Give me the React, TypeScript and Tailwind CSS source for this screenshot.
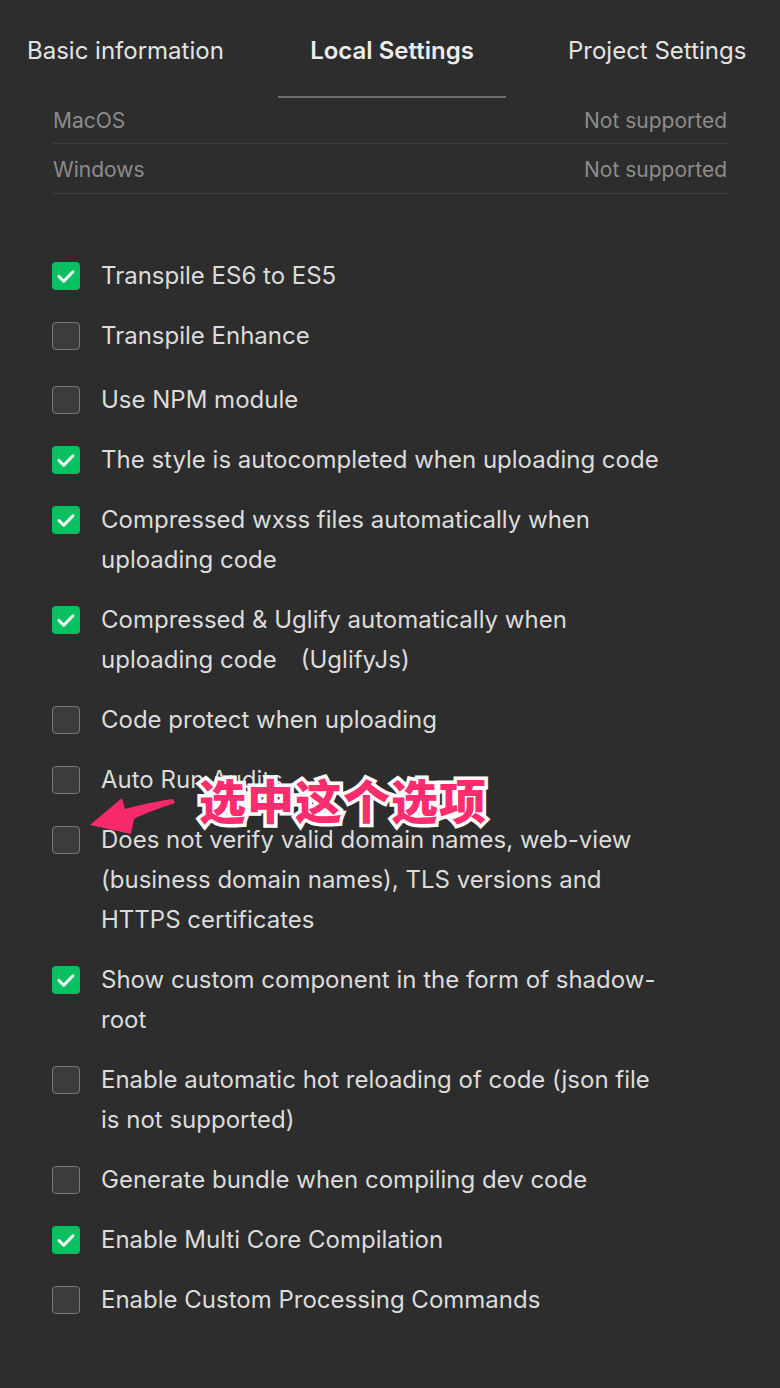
import React from "react";

type Item = { label: string; checked: boolean; extra?: string };

const items: Item[] = [
  { label: "Transpile ES6 to ES5", checked: true },
  { label: "Transpile Enhance", checked: false, extra: "mb-[4px]" },
  { label: "Use NPM module", checked: false },
  { label: "The style is autocompleted when uploading code", checked: true },
  { label: "Compressed wxss files automatically when uploading code", checked: true },
  { label: "Compressed & Uglify automatically when uploading code\u3000(UglifyJs)", checked: true },
  { label: "Code protect when uploading", checked: false },
  { label: "Auto Run Audits", checked: false },
  {
    label:
      "Does not verify valid domain names, web-view (business domain names), TLS versions and HTTPS certificates",
    checked: false,
  },
  { label: "Show custom component in the form of shadow-root", checked: true },
  { label: "Enable automatic hot reloading of code (json file is not supported)", checked: false },
  { label: "Generate bundle when compiling dev code", checked: false },
  { label: "Enable Multi Core Compilation", checked: true },
  { label: "Enable Custom Processing Commands", checked: false },
];

function Checkbox({ checked }: { checked: boolean }) {
  if (checked) {
    return (
      <div className="mt-[6px] flex h-[28px] w-[28px] shrink-0 items-center justify-center rounded-[4px] bg-[#07c160]">
        <svg width="28" height="28" viewBox="0 0 28 28">
          <path
            d="M7 14.5 L11.8 19.3 L21 9.8"
            fill="none"
            stroke="white"
            strokeWidth="3"
            strokeLinecap="round"
            strokeLinejoin="round"
          />
        </svg>
      </div>
    );
  }
  return (
    <div className="mt-[6px] h-[28px] w-[28px] shrink-0 rounded-[4px] border border-[#777777] bg-[#3c3c3c]" />
  );
}

export default function App() {
  return (
    <div className="relative min-h-[1388px] w-[780px] bg-[#2d2d2d] font-['Inter',sans-serif] text-[#dcdcdc]">
      {/* Tabs */}
      <div className="flex h-[98px] text-[24px] leading-[30px]">
        <div className="w-[278px] pl-[27px] pt-[36px] text-[#e4e4e4]">Basic information</div>
        <div className="h-[98px] w-[228px] border-b-2 border-[#6e6e6e] pt-[36px] text-center font-semibold text-[#ececec]">
          Local Settings
        </div>
        <div className="pl-[62px] pt-[36px] text-[#e4e4e4]">Project Settings</div>
      </div>

      {/* Platform info */}
      <div className="mx-[53px] text-[21px] text-[#8c8c8c]">
        <div className="flex h-[46px] items-center justify-between border-b border-[#404040]">
          <span>MacOS</span>
          <span>Not supported</span>
        </div>
        <div className="flex h-[50px] items-center justify-between border-b border-[#404040] pt-[3px]">
          <span>Windows</span>
          <span>Not supported</span>
        </div>
      </div>

      {/* Options */}
      <div className="mt-[62px] flex flex-col gap-[20px] pl-[52px]">
        {items.map((it) => (
          <div key={it.label} className={`flex items-start ${it.extra ?? ""}`}>
            <div className="w-[49px] shrink-0">
              <Checkbox checked={it.checked} />
            </div>
            <div className="max-w-[572px] text-[24px] leading-[40px] text-[#dcdcdc]">{it.label}</div>
          </div>
        ))}
      </div>

      {/* Annotation */}
      <svg className="absolute left-0 top-0" width="780" height="1388" viewBox="0 0 780 1388">
        <path
          d="M90 825 L122 798 L125 809 C140 805 158 801 173 799 L175 803 C160 808 145 813 134 819 L131 834 Z"
          fill="#f92a6b"
        />
      </svg>
      <div className="absolute left-[199px] top-[769px] whitespace-nowrap font-['Noto_Sans_CJK_SC',sans-serif] text-[47px] font-black leading-[60px] tracking-[1px] text-[#ff2d6e] [-webkit-text-stroke:7px_white] [paint-order:stroke_fill]">
        选中这个选项
      </div>
    </div>
  );
}
